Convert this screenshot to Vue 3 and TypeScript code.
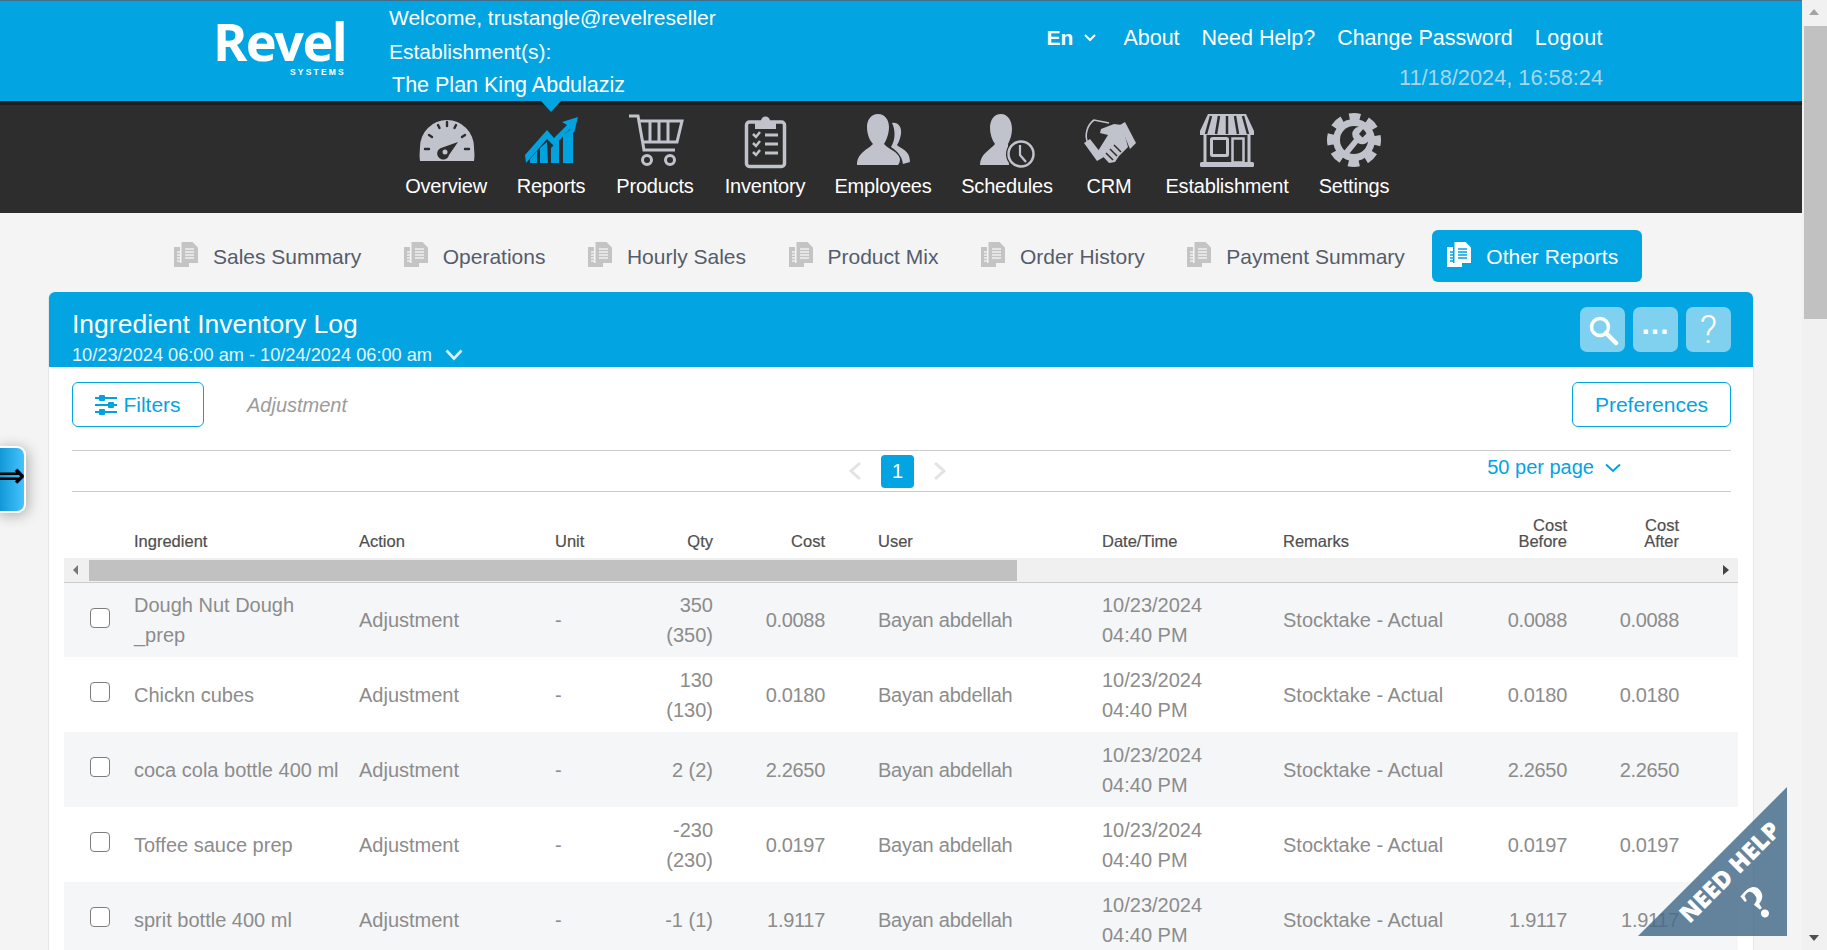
<script setup lang="ts">
interface Row {
  ingredient: string
  qty: string
  cost: string
}
const rows: Row[] = [
  { ingredient: 'Dough Nut Dough _prep', qty: '350 (350)', cost: '0.0088' },
  { ingredient: 'Chickn cubes', qty: '130 (130)', cost: '0.0180' },
  { ingredient: 'coca cola bottle 400 ml', qty: '2 (2)', cost: '2.2650' },
  { ingredient: 'Toffee sauce prep', qty: '-230 (230)', cost: '0.0197' },
  { ingredient: 'sprit bottle 400 ml', qty: '-1 (1)', cost: '1.9117' },
]
const tabs: string[] = ['Sales Summary', 'Operations', 'Hourly Sales', 'Product Mix', 'Order History', 'Payment Summary', 'Other Reports']
</script>

<template>
  <div class="screen">
    <div class="page">
      <header class="top">
        <div class="logo">
          <span class="logo-word">Revel</span>
          <span class="logo-sub">SYSTEMS</span>
        </div>
        <div class="welcome">
          <div>Welcome, trustangle@revelreseller</div>
          <div>Establishment(s):</div>
          <div class="est">The Plan King Abdulaziz</div>
        </div>
        <div class="top-right">
          <nav class="links">
            <a class="lang">En
              <svg width="12" height="8" viewBox="0 0 12 8"><path d="M1 1l5 5 5-5" fill="none" stroke="#fff" stroke-width="2" /></svg>
            </a>
            <a>About</a>
            <a>Need Help?</a>
            <a>Change Password</a>
            <a class="logout">Logout</a>
          </nav>
          <div class="clock">11/18/2024, 16:58:24</div>
        </div>
      </header>

      <nav class="mainnav">
        <span class="pointer"></span>
        <a class="nav-item">
          <svg class="nav-icon" viewBox="0 0 60 56">
            <path d="M4 48C3 42 4 38 4 34A27 27 0 0 1 58 34C58 38 59 42 58 48Z" fill="#c0c3cc" />
            <g stroke="#2d2d2d" stroke-width="2.4" stroke-linecap="round">
              <path d="M9 36h4M49 36h4M13 22l3 2M49 22l-3 2M22 12l1.500 3M40 12l-1.500 3M31 9v4" />
            </g>
            <path d="M42 29L33 42A6 6 0 1 1 25 35Z" fill="#2d2d2d" />
            <circle cx="29" cy="39" r="2.500" fill="#c0c3cc" />
          </svg>
          <span>Overview</span>
        </a>
        <a class="nav-item">
          <svg class="nav-icon" viewBox="0 0 60 56">
            <path d="M4 42L26 17L33 25L46 12L41 9L57 4L53 20L49 16L33 33L26 26L5 50Z" fill="#00a3e0" />
            <path d="M9 50V46L16 38V50ZM19 50V35L26 29L27 50ZM30 50V35L38 27V50ZM42 50V23L52 14V50Z" fill="#00a3e0" />
          </svg>
          <span>Reports</span>
        </a>
        <a class="nav-item">
          <svg class="nav-icon" viewBox="0 0 60 56">
            <g fill="none" stroke="#c0c3cc" stroke-width="3">
              <path d="M4 3H13L19 37H50" />
              <path d="M14 8H57L52 29H18" />
              <path d="M25 8V29M34 8V29M43 8V29" />
              <circle cx="22" cy="47" r="4.500" />
              <circle cx="45" cy="47" r="4.500" />
            </g>
          </svg>
          <span>Products</span>
        </a>
        <a class="nav-item">
          <svg class="nav-icon" viewBox="0 0 60 56">
            <rect x="11.500" y="9" width="38" height="44.500" rx="3" fill="none" stroke="#c0c3cc" stroke-width="3.500" />
            <path d="M20 16V8H26A4.500 4.500 0 0 1 35 8H41V16Z" fill="#c0c3cc" />
            <g fill="none" stroke="#c0c3cc" stroke-width="2.500">
              <path d="M18 21l3 3 4-5M18 30l3 3 4-5M18 39l3 3 4-5" />
              <path d="M30 22H43M30 31H43M30 40H43" stroke-width="3" />
            </g>
          </svg>
          <span>Inventory</span>
        </a>
        <a class="nav-item">
          <svg class="nav-icon" viewBox="0 0 60 56">
            <path d="M39 10C45 9 49 14 48 21C47 26 46 29 44 32C48 36 57 37 57 49L50 51C49 43 44 38 38 34C42 28 43 18 39 10Z" fill="#c0c3cc" />
            <path d="M25 1C32 1 36 7 36 14C36 21 33 28 31 31C36 37 45 38 47 46C47 49 46 51 45 52L4 52C4 40 14 37 20 31C16 27 14 20 14 14C14 7 18 1 25 1Z" fill="#c0c3cc" />
          </svg>
          <span>Employees</span>
        </a>
        <a class="nav-item">
          <svg class="nav-icon" viewBox="0 0 60 56">
            <path d="M24 1C31 1 35 8 35 16C35 22 33 27 31 31L32 52H3C3 41 13 37 18 31C15 27 13 21 13 15C13 7 17 1 24 1Z" fill="#c0c3cc" />
            <circle cx="44" cy="41" r="15" fill="#2d2d2d" />
            <circle cx="44" cy="41" r="12.500" fill="#2d2d2d" stroke="#c0c3cc" stroke-width="2.500" />
            <path d="M43 32V42L49 49" fill="none" stroke="#c0c3cc" stroke-width="2.200" />
          </svg>
          <span>Schedules</span>
        </a>
        <a class="nav-item">
          <svg class="nav-icon" viewBox="0 0 60 56">
            <path d="M9 30C5 23 8 12 15 7L30 10" fill="none" stroke="#c0c3cc" stroke-width="1.600" />
            <path d="M5 30L11 26L25 44L18 48Z" fill="#c0c3cc" />
            <path d="M22 16L35 11L43 12L49 34L40 43L36 49L30 50L19 38L29 22L21 20Z" fill="#c0c3cc" />
            <path d="M41 12L46 9L57 30L51 36Z" fill="#c0c3cc" />
            <path d="M27 40L34 47M31 36L38 43M35 32L42 39" stroke="#2d2d2d" stroke-width="1.500" />
          </svg>
          <span>CRM</span>
        </a>
        <a class="nav-item">
          <svg class="nav-icon" viewBox="0 0 60 56">
            <path d="M11 1H49L57 18V22H3V18Z" fill="#c0c3cc" />
            <path d="M14 3L9 21M22 3L19 21M30 3V21M38 3L41 21M46 3L51 21" stroke="#2d2d2d" stroke-width="2.500" />
            <path d="M8 22V51M52 22V51" stroke="#c0c3cc" stroke-width="3" />
            <rect x="14.500" y="25.500" width="16" height="17" rx="1" fill="none" stroke="#c0c3cc" stroke-width="3" />
            <rect x="35.500" y="25.500" width="11" height="24" fill="none" stroke="#c0c3cc" stroke-width="2.500" />
            <rect x="3" y="49" width="54" height="5" rx="1.500" fill="#c0c3cc" />
          </svg>
          <span>Establishment</span>
        </a>
        <a class="nav-item">
          <svg class="nav-icon" viewBox="0 0 60 56">
            <circle cx="30" cy="27" r="21" fill="#c0c3cc" />
            <circle cx="30" cy="27" r="23.500" fill="none" stroke="#c0c3cc" stroke-width="7" stroke-dasharray="11 7.460" stroke-dashoffset="5.500" />
            <circle cx="30" cy="27" r="14" fill="#2d2d2d" />
            <path d="M20 38L30 26A7.500 7.500 0 0 1 40 15L35 21L38.500 24.500L44 19A7.500 7.500 0 0 1 34 30L25 41Z" fill="#c0c3cc" />
          </svg>
          <span>Settings</span>
        </a>
      </nav>

      <div class="tabs">
        <a v-for="(t, i) in tabs" :key="t" class="tab" :class="{ active: i === tabs.length - 1 }">
          <svg class="doc" width="24" height="26" viewBox="0 0 24 26">
            <path class="doc-back" d="M0 5H15V25H0Z" />
            <path class="doc-line" d="M3 10H8M3 13H8M3 16H8M3 19H8" />
            <path class="doc-edge" d="M6 1H18L23 6V21H6Z" />
            <path class="doc-front" d="M7.500 0H18.500L24 5.500V21H7.500Z" />
            <path class="doc-line" d="M11 7H20M11 10H20M11 13H20M11 16H20" />
          </svg>
          <span class="tab-label">{{ t }}</span>
        </a>
      </div>

      <section class="card">
        <div class="card-head">
          <div class="card-title">
            <h1>Ingredient Inventory Log</h1>
            <div class="range">10/23/2024 06:00 am - 10/24/2024 06:00 am
              <svg width="18" height="12" viewBox="0 0 18 12"><path d="M1.500 1.500L9 9.500L16.500 1.500" fill="none" stroke="#d8f1fb" stroke-width="2.600" /></svg>
            </div>
          </div>
          <div class="head-btns">
            <button class="hbtn">
              <svg width="32" height="32" viewBox="0 0 32 32">
                <circle cx="13" cy="13" r="8.500" fill="none" stroke="#fff" stroke-width="3.500" />
                <path d="M19 19L29 29" stroke="#fff" stroke-width="4.500" stroke-linecap="round" />
              </svg>
            </button>
            <button class="hbtn dots">...</button>
            <button class="hbtn qm">?</button>
          </div>
        </div>

        <div class="tools">
          <button class="outline filters">
            <svg class="filter-icon" width="22" height="20" viewBox="0 0 22 20">
              <path d="M0 3H22M0 10H22M0 17H22" stroke="#00a3e0" stroke-width="2" />
              <rect x="4" y="0" width="6" height="6" rx="1" fill="#00a3e0" />
              <rect x="13" y="7" width="6" height="6" rx="1" fill="#00a3e0" />
              <rect x="4" y="14" width="6" height="6" rx="1" fill="#00a3e0" />
            </svg>
            <span class="btn-label">Filters</span>
          </button>
          <span class="crumb">Adjustment</span>
          <button class="outline prefs"><span class="btn-label">Preferences</span></button>
        </div>

        <div class="pager">
          <svg class="pg-arrow" width="14" height="20" viewBox="0 0 14 20"><path d="M12 2L3 10L12 18" fill="none" stroke="#e3e3e3" stroke-width="3" /></svg>
          <span class="pg-num">1</span>
          <svg class="pg-arrow" width="14" height="20" viewBox="0 0 14 20"><path d="M2 2L11 10L2 18" fill="none" stroke="#e3e3e3" stroke-width="3" /></svg>
          <span class="per">50 per page
            <svg width="16" height="10" viewBox="0 0 16 10"><path d="M1 1.500L8 8L15 1.500" fill="none" stroke="#00a3e0" stroke-width="2" /></svg>
          </span>
        </div>

        <div class="grid-wrap">
          <div class="row head">
            <span></span>
            <span>Ingredient</span>
            <span>Action</span>
            <span>Unit</span>
            <span class="r">Qty</span>
            <span class="r">Cost</span>
            <span class="pl">User</span>
            <span>Date/Time</span>
            <span>Remarks</span>
            <span class="r">Cost<br />Before</span>
            <span class="r">Cost<br />After</span>
          </div>
          <div class="hscroll">
            <i class="arr left"></i>
            <span class="hthumb"></span>
            <i class="arr right"></i>
          </div>
          <div v-for="row in rows" :key="row.ingredient" class="row body">
            <span class="chk"><input type="checkbox" /></span>
            <span class="ingr">{{ row.ingredient }}</span>
            <span>Adjustment</span>
            <span>-</span>
            <span class="r">{{ row.qty }}</span>
            <span class="r num">{{ row.cost }}</span>
            <span class="pl user">Bayan abdellah</span>
            <span class="dt">10/23/2024 04:40 PM</span>
            <span class="nw">Stocktake - Actual</span>
            <span class="r num">{{ row.cost }}</span>
            <span class="r num">{{ row.cost }}</span>
          </div>
        </div>
      </section>
    </div>

    <div class="vscroll">
      <i class="varr up"></i>
      <span class="vthumb"></span>
      <i class="varr down"></i>
    </div>

    <div class="side-tab">⇒</div>

    <div class="need-help">
      <span class="nh-text">NEED HELP</span>
      <span class="nh-q">?</span>
    </div>
  </div>
</template>

<style>
html,
body {
  margin: 0;
  overflow: hidden;
}
</style>

<style scoped>
.screen {
  position: relative;
  display: flex;
  width: 1827px;
  height: 950px;
  overflow: hidden;
  font-family: "Liberation Sans", Arial, sans-serif;
  background: #f4f4f4;
}
.page {
  width: 1802px;
  flex: none;
}
a {
  cursor: pointer;
}

/* top bar */
.top {
  display: flex;
  box-sizing: border-box;
  height: 101px;
  border-top: 1px solid #3f6f8a;
  background: #02a4e2;
  color: #fff;
  font-size: 21.500px;
}
.logo {
  display: flex;
  flex-direction: column;
  align-items: flex-end;
  width: 130px;
  margin: 14px 0 0 216px;
}
.logo-word {
  font-family: "Noto Sans", sans-serif;
  font-size: 52px;
  font-weight: 700;
  line-height: 52px;
  letter-spacing: -1.500px;
}
.logo-sub {
  font-size: 8.500px;
  font-weight: 700;
  line-height: 10px;
  letter-spacing: 2.200px;
}
.welcome {
  margin-left: 43px;
  font-size: 21px;
  line-height: 33.500px;
  white-space: nowrap;
}
.est {
  margin: 1px 0 0 3px;
  font-size: 21.500px;
}
.top-right {
  margin-left: auto;
  padding: 22px 199px 0 0;
  text-align: right;
}
.links {
  display: flex;
  gap: 22px;
  justify-content: flex-end;
  align-items: center;
  line-height: 30px;
}
.lang {
  display: flex;
  align-items: center;
  gap: 11px;
  margin-right: 5px;
  font-size: 21px;
  font-weight: 700;
}
.logout {
  letter-spacing: 0.400px;
}
.clock {
  margin-top: 10px;
  font-size: 21.750px;
  line-height: 30px;
  color: #a9d6e9;
}

/* main nav */
.mainnav {
  position: relative;
  display: grid;
  grid-template-columns: 82px 68px 80px 80px 96px 92px 52px 124px 70px;
  gap: 30px;
  box-sizing: border-box;
  height: 112px;
  padding: 8px 0 0 405px;
  border-top: 4px solid #1e1e1e;
  background: #2d2d2d;
  color: #fff;
  font-size: 20px;
  letter-spacing: -0.200px;
}
.pointer {
  position: absolute;
  top: -4px;
  left: 541px;
  width: 0;
  height: 0;
  border-left: 10px solid transparent;
  border-right: 10px solid transparent;
  border-top: 11px solid #02a4e2;
}
.nav-item {
  display: flex;
  flex-direction: column;
  align-items: center;
  white-space: nowrap;
}
.nav-icon {
  flex: none;
  width: 60px;
  height: 56px;
  margin: 0 -10px 5px;
}
.nav-item span {
  line-height: 24px;
}

/* tabs */
.tabs {
  display: flex;
  gap: 3.500px;
  padding: 17px 0 10px 159px;
  font-size: 21px;
  color: #555c6b;
}
.tab {
  display: flex;
  align-items: center;
  gap: 15px;
  height: 52px;
  padding: 0 24px 0 15px;
  border-radius: 6px;
  white-space: nowrap;
}
.tab-label {
  margin-top: 2px;
}
.doc {
  margin-top: -2px;
}
.tab.active {
  background: #02a4e2;
  color: #fff;
}
.doc-back,
.doc-front {
  fill: #c4c4c4;
}
.doc-edge {
  fill: #f4f4f4;
}
.doc-line {
  fill: none;
  stroke: #f0f0f0;
  stroke-width: 1.500;
}
.active .doc-back,
.active .doc-front {
  fill: #fff;
}
.active .doc-edge {
  fill: #02a4e2;
}
.active .doc-line {
  stroke: #02a4e2;
}

/* card */
.card {
  box-sizing: border-box;
  width: 1706px;
  height: 700px;
  margin-left: 48px;
  border: 1px solid #e6e6e6;
  border-width: 0 1px;
  border-radius: 6px 6px 0 0;
  background: #fff;
}
.card-head {
  display: flex;
  justify-content: space-between;
  box-sizing: border-box;
  height: 75px;
  padding: 15px 22px 0 23px;
  border-radius: 6px 6px 0 0;
  background: #02a4e2;
  color: #fff;
}
.card-title h1 {
  margin: 0;
  font-size: 26.500px;
  font-weight: 400;
  line-height: 34px;
}
.range {
  display: flex;
  align-items: center;
  gap: 13px;
  margin-top: 2px;
  font-size: 18.200px;
  line-height: 24px;
  color: #e4f5fc;
}
.head-btns {
  display: flex;
  gap: 8px;
}
.hbtn {
  display: flex;
  align-items: center;
  justify-content: center;
  width: 45px;
  height: 45px;
  padding: 0;
  border: 0;
  border-radius: 7px;
  background: #80d1f0;
  color: #fff;
  font-family: inherit;
}
.dots {
  font-size: 30px;
  font-weight: 700;
  line-height: 20px;
  padding-bottom: 12px;
  letter-spacing: 1px;
}
.qm {
  font-family: Roboto, "Liberation Sans", sans-serif;
  font-size: 38px;
  font-weight: 300;
}

.tools {
  display: flex;
  align-items: center;
  height: 84px;
  margin: 0 22px 0 23px;
  padding-bottom: 9px;
  box-sizing: border-box;
  border-bottom: 1px solid #ccc;
}
.outline {
  box-sizing: border-box;
  height: 45px;
  border: 1px solid #02a4e2;
  border-radius: 6px;
  background: #fff;
  color: #02a4e2;
  font-family: inherit;
  font-size: 21px;
}
.btn-label {
  display: block;
  padding-top: 2px;
}
.filter-icon {
  margin-top: 2px;
}
.filters {
  display: flex;
  align-items: center;
  justify-content: center;
  gap: 6px;
  width: 132px;
  padding: 0;
}
.crumb {
  margin-left: 43px;
  padding-top: 2px;
  font-size: 20px;
  font-style: italic;
  color: #9b9b9b;
}
.prefs {
  width: 159px;
  margin-left: auto;
  padding: 0;
}

.pager {
  display: flex;
  align-items: center;
  box-sizing: border-box;
  height: 41px;
  margin: 0 22px 0 23px;
  border-bottom: 1px solid #ccc;
}
.pg-arrow:first-child {
  margin-left: 776px;
}
.pg-num {
  width: 33px;
  height: 33px;
  margin: 0 19px;
  border-radius: 4px;
  background: #02a4e2;
  color: #fff;
  font-size: 20px;
  line-height: 33px;
  text-align: center;
}
.per {
  display: flex;
  align-items: center;
  gap: 11px;
  margin-left: auto;
  margin-right: 110px;
  padding-bottom: 7px;
  color: #02a4e2;
  font-size: 20px;
}

.grid-wrap {
  width: 1674px;
  margin-left: 15px;
}
.row {
  display: grid;
  grid-template-columns: 70px 225px 196px 88px 70px 112px 277px 181px 162px 122px 112px 59px;
  align-items: center;
}
.row .r {
  text-align: right;
}
.row .pl {
  padding-left: 53px;
}
.row .num {
  letter-spacing: -0.300px;
}
.row .user {
  letter-spacing: -0.250px;
}
.head {
  height: 66px;
  padding-bottom: 9px;
  box-sizing: border-box;
  align-items: end;
  font-size: 16.500px;
  line-height: 16px;
  color: #4f4f4f;
  -webkit-text-stroke: 0.200px #4f4f4f;
}
.hscroll {
  display: flex;
  align-items: center;
  box-sizing: border-box;
  height: 25px;
  padding: 2px 0 1px 25px;
  border-bottom: 1px solid #ccc;
  background: #f0f0f0;
  position: relative;
}
.hthumb {
  display: block;
  width: 928px;
  height: 21px;
  background: #c1c1c1;
}
.arr {
  position: absolute;
  top: 7px;
  width: 0;
  height: 0;
  border-top: 5px solid transparent;
  border-bottom: 5px solid transparent;
}
.arr.left {
  left: 9px;
  border-right: 5px solid #777;
}
.arr.right {
  right: 9px;
  border-left: 6px solid #444;
}
.body {
  height: 75px;
  font-size: 20px;
  line-height: 30px;
  color: #8c8c8c;
}
.hscroll + .body {
  height: 74px;
}
.body:nth-child(odd) {
  background: #f5f6f8;
}
.chk {
  display: flex;
  justify-content: flex-end;
  padding-right: 24px;
  margin-top: -5px;
}
.chk input {
  appearance: none;
  width: 20px;
  height: 20px;
  margin: 0;
  border: 1.500px solid #7d7d7d;
  border-radius: 4px;
  background: #fff;
}
.ingr {
  padding-right: 15px;
}
.dt {
  padding-right: 30px;
}
.nw {
  white-space: nowrap;
}

/* vertical scrollbar */
.vscroll {
  position: relative;
  flex: none;
  width: 25px;
  height: 950px;
  background: #f1f1f1;
}
.vthumb {
  position: absolute;
  top: 26px;
  right: 0;
  width: 23px;
  height: 293px;
  background: #c1c1c1;
}
.varr {
  position: absolute;
  left: 7px;
  width: 0;
  height: 0;
  border-left: 5px solid transparent;
  border-right: 5px solid transparent;
}
.varr.up {
  top: 9px;
  border-bottom: 6px solid #a3a3a3;
}
.varr.down {
  bottom: 9px;
  border-top: 6px solid #505050;
}

/* overlays */
.side-tab {
  position: absolute;
  top: 446px;
  left: -3px;
  box-sizing: border-box;
  width: 29px;
  height: 67px;
  border: 2px solid #fff;
  border-left: 0;
  border-radius: 0 9px 9px 0;
  background: linear-gradient(90deg, #0c93d2, #45c3ff);
  box-shadow: 2px 2px 14px rgba(0, 0, 0, 0.3);
  color: #000;
  font-family: "DejaVu Sans", sans-serif;
  font-size: 34px;
  font-weight: 700;
  line-height: 54px;
  text-align: right;
  white-space: nowrap;
  overflow: hidden;
}
.need-help {
  position: absolute;
  top: 787px;
  left: 1638px;
  width: 149px;
  height: 149px;
  background: rgba(70, 108, 140, 0.84);
  clip-path: polygon(100% 0, 100% 100%, 0 100%);
  color: #fff;
  font-weight: 700;
}
.nh-text {
  position: absolute;
  top: 71px;
  left: 26px;
  width: 130px;
  font-family: "Open Sans", sans-serif;
  font-size: 24px;
  font-weight: 800;
  line-height: 28px;
  text-align: center;
  white-space: nowrap;
  transform: rotate(-45deg);
}
.nh-q {
  position: absolute;
  top: 90px;
  left: 107px;
  font-family: "Liberation Serif", serif;
  font-size: 50px;
  line-height: 50px;
  transform: rotate(-40deg);
}
</style>
